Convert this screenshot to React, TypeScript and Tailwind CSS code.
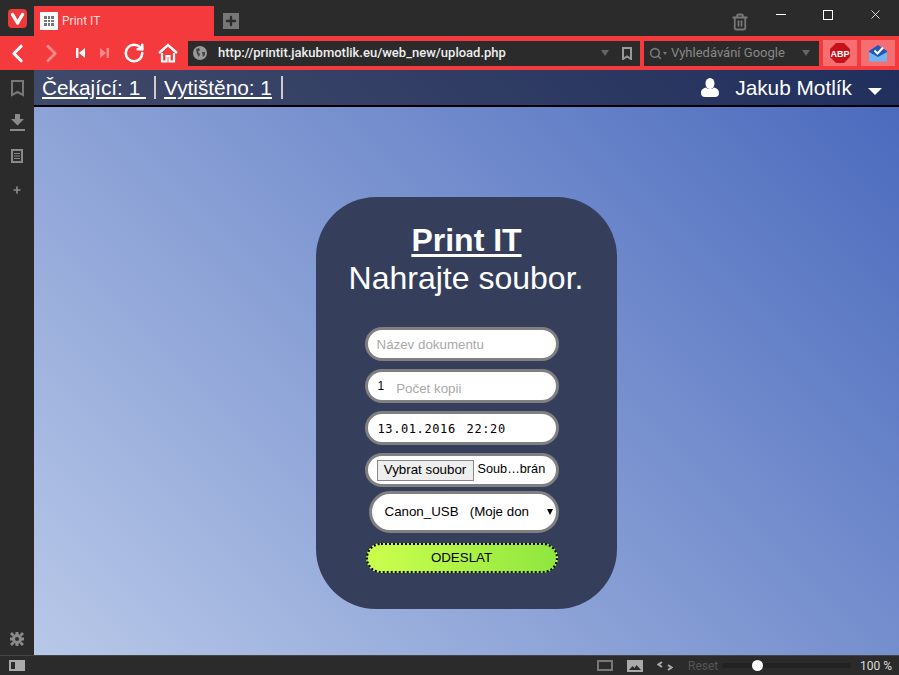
import React from "react";
import { Trash2, X, ChevronLeft, ChevronRight, RotateCw, Search, Plus } from "lucide-react";

const fieldClass =
  "flex h-[34px] w-[194px] items-center rounded-full border-[3px] border-[#808080] bg-white";

const VivaldiLogo = () => (
  <svg width="19" height="19" viewBox="0 0 19 19">
    <rect width="19" height="19" rx="4" fill="#ef3939" />
    <path d="M4.5 5.5 9.5 14l5-8.5" fill="none" stroke="#fff" strokeWidth="3.4" strokeLinecap="round" strokeLinejoin="round" />
  </svg>
);

const Toolbar = () => (
  <div className="flex h-[34px] items-center bg-[#f43a3c] font-['Roboto',sans-serif]">
    <div className="flex w-[34px] justify-center">
      <ChevronLeft size={29} strokeWidth={2.6} className="text-white" />
    </div>
    <div className="flex w-[34px] justify-center">
      <ChevronRight size={29} strokeWidth={2.4} className="text-[#f98a8b]" />
    </div>
    {/* rewind / fast forward */}
    <svg width="11" height="12" viewBox="0 0 11 12" className="ml-[7px] fill-white">
      <path d="M1 1h2.4v10H1zM10 1v10L4 6z" />
    </svg>
    <svg width="11" height="12" viewBox="0 0 11 12" className="ml-[13px] fill-[#f98a8b]">
      <path d="M10 1H7.6v10H10zM1 1v10l6-5z" />
    </svg>
    <RotateCw size={22} strokeWidth={2.8} className="ml-[13px] text-white" />
    <svg width="20" height="20" viewBox="0 0 20 20" className="ml-[13px]">
      <path d="M1 10 10 2l9 8" fill="none" stroke="#fff" strokeWidth="2.4" />
      <path d="M4 10v8.5h4.5V13h3v5.5H16V10" fill="none" stroke="#fff" strokeWidth="2.2" />
    </svg>
    <div className="ml-[10px] flex h-[25px] w-[452px] items-center bg-[#2b2b2b] pr-[8px] pl-[5px]">
      <svg width="14" height="14" viewBox="0 0 14 14">
        <circle cx="7" cy="7" r="7" fill="#999" />
        <path d="M3 3l3-1 1 2-2 2 2 2-1 3-2-3zM9 6l3 0 0 3-2 2z" fill="#444" />
      </svg>
      <span className="ml-[11px] text-[13px] font-medium text-[#eee]">http://printit.jakubmotlik.eu/web_new/upload.php</span>
      <span className="ml-auto h-0 w-0 border-x-[4px] border-t-[6px] border-x-transparent border-t-[#666]" />
      <svg width="10" height="13" viewBox="0 0 10 13" className="ml-[13px]">
        <path d="M1 1h8v11L5 9.5 1 12z" fill="none" stroke="#999" strokeWidth="2" />
      </svg>
    </div>
    <div className="ml-[4px] flex h-[25px] w-[175px] items-center bg-[#2b2b2b] pr-[9px] pl-[5px]">
      <Search size={13} strokeWidth={3} className="text-[#777]" />
      <span className="ml-px h-0 w-0 border-x-[2px] border-t-[3px] border-x-transparent border-t-[#777]" />
      <span className="ml-[4px] text-[13px] text-[#888]">Vyhledávání Google</span>
      <span className="ml-auto h-0 w-0 border-x-[4px] border-t-[6px] border-x-transparent border-t-[#666]" />
    </div>
    <div className="ml-[4px] flex h-[26px] w-[34px] items-center justify-center bg-[#f66f70]">
      <svg width="20" height="20" viewBox="0 0 20 20" className="font-['Liberation_Sans',sans-serif]">
        <polygon points="6,0 14,0 20,6 20,14 14,20 6,20 0,14 0,6" fill="#c8101a" />
        <text x="10" y="13.500" textAnchor="middle" fontSize="9" fontWeight="700" fill="#fff">ABP</text>
      </svg>
    </div>
    <div className="ml-[4px] flex h-[26px] w-[34px] items-center justify-center bg-[#f66f70]">
      <svg width="20" height="18" viewBox="0 0 20 18">
        <path d="M1 7 10 1l9 6v10H1z" fill="#2256bd" />
        <path d="M1 8l9 5 9-5v9.500H1z" fill="#72b4f0" />
        <path d="M6.500 6.500l3 3 5.500-6" fill="none" stroke="#fff" strokeWidth="2" />
      </svg>
    </div>
  </div>
);

const Sidebar = () => (
  <div className="flex w-[34px] flex-col items-center bg-[#2b2b2b] pt-[1px] pb-[9px]">
    <div className="flex h-[34px] items-center">
      <svg width="13" height="17" viewBox="0 0 13 17">
        <path d="M1 1h11v14l-5.500-3L1 15z" fill="none" stroke="#777" strokeWidth="2" />
      </svg>
    </div>
    <div className="flex h-[34px] items-center">
      <svg width="15" height="17" viewBox="0 0 15 17">
        <path d="M5 0h5v5h4l-6.500 6.500L1 5h4zM0 15h15v2H0z" fill="#8a8a8a" />
      </svg>
    </div>
    <div className="flex h-[34px] items-center">
      <svg width="12" height="14" viewBox="0 0 12 14">
        <path d="M0 0h12v14H0z" fill="#8a8a8a" />
        <path d="M2 2h8v10H2z" fill="#2b2b2b" />
        <path d="M3 4h6v1H3zM3 6.500h6v1H3zM3 9h6v1H3z" fill="#8a8a8a" />
      </svg>
    </div>
    <div className="flex h-[34px] items-center">
      <Plus size={10} strokeWidth={4} className="text-[#8a8a8a]" />
    </div>
    <svg width="14" height="14" viewBox="0 0 14 14" className="mt-auto">
      <circle cx="7" cy="7" r="3.500" fill="none" stroke="#8a8a8a" strokeWidth="3" />
      <path d="M5.500 0h3v3h-3zM5.500 11h3v3h-3zM0 5.500h3v3H0zM11 5.500h3v3h-3z" fill="#8a8a8a" />
      <path d="M2 0l2.500 2.500-2 2L0 2zM12 0l2 2-2.500 2.500-2-2zM2 14l-2-2 2.500-2.500 2 2zM12 14l-2.500-2.500 2-2L14 12z" fill="#8a8a8a" />
    </svg>
  </div>
);

const UploadCard = () => (
  <div className="flex h-[412px] w-[301px] flex-col items-center rounded-[60px] bg-[#353f5c] pt-[24px] text-white">
    <h1 className="ml-px text-[32px] leading-[38px] font-bold underline underline-offset-[3px]">Print IT</h1>
    <p className="text-[32px] leading-[38px]">Nahrajte soubor.</p>

    <div className="mt-[30px] mr-[9px] flex flex-col items-end">
      <div className={`${fieldClass} pt-px pl-[9px] text-[13.33px] text-[#a9a9a9]`}>Název dokumentu</div>
      <div className={`${fieldClass} mt-[8px] pl-[10px] text-[13.33px] text-[#a9a9a9]`}>
        <span className="-mt-[1px] text-[12px] text-black">1</span>
        <span className="mt-[6px] ml-[12px]">Počet kopii</span>
      </div>
      <div className={`${fieldClass} mt-[8px] pt-px pl-[10px] font-['DejaVu_Sans_Mono',monospace] text-[12px] tracking-[0.6px] text-black`}>
        13.01.2016<span className="ml-[3px]">&nbsp;</span>22:20
      </div>
      <div className={`${fieldClass} mt-[8px] pl-[9px] text-black`}>
        <span className="flex h-[21px] w-[97px] items-center justify-center border border-[#888] bg-[#eee] text-[13.33px]">
          Vybrat soubor
        </span>
        <span className="ml-[4px] text-[12.7px]">Soub…brán</span>
      </div>
      <div className="mt-[4px] flex h-[42px] w-[190px] items-center justify-between rounded-full border-[3px] border-[#808080] bg-white pr-[3px] pl-[13px] text-[13.33px] text-black">
        <span className="whitespace-pre">Canon_USB   (Moje don</span>
        <span className="h-0 w-0 border-x-[3.5px] border-t-[6px] border-x-transparent border-t-black" />
      </div>
      <button className="mt-[10px] mr-px flex h-[30px] w-[192px] items-center justify-center rounded-full border-2 border-dotted border-black bg-gradient-to-r from-[#ccff4d] to-[#8ee63f] text-[13.33px] text-black">
        ODESLAT
      </button>
    </div>
  </div>
);

const App = () => (
  <div className="flex h-[675px] w-[899px] flex-col overflow-hidden bg-[#2b2b2b] font-['Liberation_Sans',sans-serif]">
    {/* tab strip */}
    <div className="flex h-[36px] items-end">
      <div className="flex h-full w-[34px] items-center justify-center pt-[1px]">
        <VivaldiLogo />
      </div>
      <div className="flex h-[30px] w-[180px] items-center bg-[#f43a3c] pl-[6px]">
        <div className="grid h-[18px] w-[18px] grid-cols-3 content-center justify-center gap-px bg-white px-[4px]">
          {Array.from({ length: 9 }).map((_, i) => (
            <span key={i} className="h-[2.5px] w-[2.5px] bg-[#777]" />
          ))}
        </div>
        <span className="ml-[4px] font-['Roboto',sans-serif] text-[12px] text-[#fdd]">Print IT</span>
      </div>
      <div className="mb-[7px] ml-[9px] flex h-[16px] w-[16px] items-center justify-center bg-[#777]">
        <Plus size={14} strokeWidth={4} className="text-[#2b2b2b]" />
      </div>
      <div className="ml-auto flex h-full items-center pr-[16px] pb-[7px]">
        <Trash2 size={18} strokeWidth={2.4} className="mt-[14px] text-[#777]" />
        <span className="ml-[27px] h-px w-[10px] bg-white" />
        <span className="ml-[37px] h-[10px] w-[10px] border border-white" />
        <X size={15} strokeWidth={1.3} className="ml-[35px] text-white" />
      </div>
    </div>

    <Toolbar />

    <div className="flex min-h-0 flex-1">
      <Sidebar />
      <div className="flex flex-1 flex-col bg-[linear-gradient(45deg,#b8c8e8,#4868bc)]">
        {/* page header */}
        <div className="flex h-[37px] items-center border-b-2 border-black bg-[#000010]/55 pr-[17px] pl-[8px] text-[20.8px] text-white">
          <span className="underline underline-offset-2">Čekající: 1&nbsp;</span>
          <span className="ml-[8px] h-[23px] w-[2px] bg-[#ccc]" />
          <span className="ml-[8px] underline underline-offset-2">Vytištěno: 1</span>
          <span className="ml-[9px] h-[23px] w-[2px] bg-[#ccc]" />
          <svg width="18" height="19" viewBox="0 0 18 19" className="ml-auto">
            <ellipse cx="9" cy="5.500" rx="4.500" ry="5.500" fill="#fff" />
            <path d="M0 15c0-4 3-5 5-5.500 2 2 6 2 8 0 2 .5 5 1.500 5 5.500 0 3-2 4-4 4H4c-2 0-4-1-4-4z" fill="#fff" />
          </svg>
          <span className="ml-[16px]">Jakub Motlík</span>
          <span className="mt-[8px] ml-[16px] h-0 w-0 border-x-[7px] border-t-[7px] border-x-transparent border-t-white" />
        </div>
        <div className="flex flex-1 justify-center pt-[90px] pr-[1px]">
          <UploadCard />
        </div>
      </div>
    </div>

    {/* status bar */}
    <div className="flex h-[20px] items-center border-t border-[#444] pr-[7px] font-['Roboto',sans-serif]">
      <div className="ml-[9px] flex h-[11px] w-[16px] items-center bg-[#aaa] pl-[2px]">
        <span className="h-[7px] w-[4px] bg-[#2b2b2b]" />
      </div>
      <span className="ml-[572px] h-[11px] w-[16px] border-2 border-[#777]" />
      <svg width="16" height="12" viewBox="0 0 16 12" className="ml-[14px]">
        <path d="M0 0h16v12H0z" fill="#aaa" />
        <path d="M2 10l3.500-4 2 2 2-3L14 10z" fill="#2b2b2b" />
      </svg>
      <svg width="16" height="10" viewBox="0 0 16 10" className="ml-[14px]">
        <path d="M5 1 1.500 3.500 5 6" fill="none" stroke="#aaa" strokeWidth="2" />
        <path d="M11 4l3.500 2.500L11 9" fill="none" stroke="#aaa" strokeWidth="2" />
      </svg>
      <span className="ml-[15px] text-[12px] text-[#555]">Reset</span>
      <div className="relative ml-[4px] h-[5px] w-[129px] rounded bg-[#222]">
        <span className="absolute -top-[3px] left-[30px] h-[11px] w-[11px] rounded-full bg-white" />
      </div>
      <span className="ml-auto text-[12px] text-[#ddd]">100 %</span>
    </div>
  </div>
);

export default App;
